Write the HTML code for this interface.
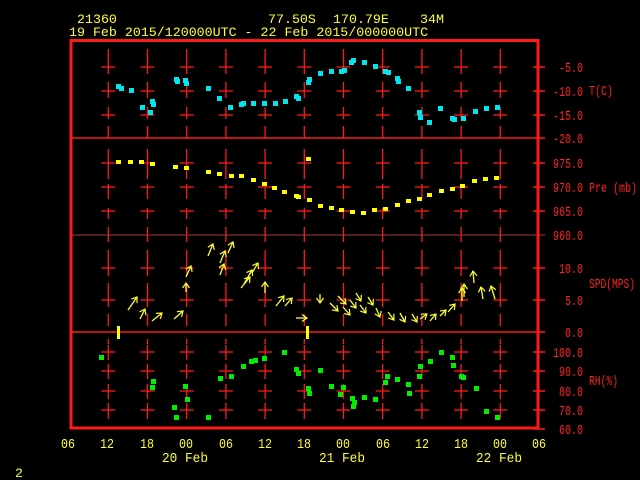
<!DOCTYPE html>
<html><head><meta charset="utf-8"><style>
html,body{margin:0;padding:0;background:#000;width:640px;height:480px;overflow:hidden}
svg{display:block}
text{font-family:"Liberation Mono",monospace;font-size:13.3px}
.y{fill:#ffff33}.r{fill:#ff2020}
.r text{font-size:14px}
.x text{font-size:14px}
</style></head><body>
<svg width="640" height="480" viewBox="0 0 640 480" xmlns="http://www.w3.org/2000/svg">
<defs>
<marker id="ah" markerWidth="8" markerHeight="8" refX="6" refY="4" orient="auto" markerUnits="userSpaceOnUse">
<path d="M1,0.5 L6,4 L1,7.5" fill="none" stroke="#ffff33" stroke-width="1.2"/>
</marker>
<g id="vg" stroke="#ff1a1a" stroke-width="1.3">
<line x1="0" y1="49" x2="0" y2="61"/><line x1="0" y1="60" x2="0" y2="74"/><line x1="-7" y1="67" x2="7" y2="67"/>
<line x1="0" y1="82" x2="0" y2="98"/><line x1="-7" y1="91" x2="7" y2="91"/>
<line x1="0" y1="107" x2="0" y2="119"/><line x1="-7" y1="115" x2="7" y2="115"/>
<line x1="0" y1="126" x2="0" y2="138"/>
<line x1="0" y1="149" x2="0" y2="160"/><line x1="0" y1="160" x2="0" y2="179"/><line x1="-7" y1="163" x2="7" y2="163"/>
<line x1="0" y1="184" x2="0" y2="199"/><line x1="-7" y1="187" x2="7" y2="187"/>
<line x1="0" y1="208" x2="0" y2="219"/><line x1="-7" y1="211" x2="7" y2="211"/>
<line x1="0" y1="227" x2="0" y2="235"/>
<line x1="0" y1="235" x2="0" y2="242"/><line x1="0" y1="250" x2="0" y2="262"/>
<line x1="0" y1="262" x2="0" y2="276"/><line x1="-7" y1="268" x2="7" y2="268"/>
<line x1="0" y1="283" x2="0" y2="293"/><line x1="0" y1="293" x2="0" y2="307"/><line x1="-7" y1="300" x2="7" y2="300"/>
<line x1="0" y1="314" x2="0" y2="326"/>
<line x1="0" y1="339" x2="0" y2="344"/><line x1="0" y1="345" x2="0" y2="360"/><line x1="-7" y1="352" x2="7" y2="352"/>
<line x1="0" y1="364" x2="0" y2="379"/><line x1="-7" y1="371" x2="7" y2="371"/>
<line x1="0" y1="384" x2="0" y2="399"/><line x1="-7" y1="391" x2="7" y2="391"/>
<line x1="0" y1="403" x2="0" y2="419"/><line x1="-7" y1="410" x2="7" y2="410"/>
</g>
</defs>
<text class="y" x="77" y="23">21360</text>
<text class="y" x="268" y="23">77.50S</text>
<text class="y" x="333" y="23">170.79E</text>
<text class="y" x="420" y="23">34M</text>
<text class="y" x="69" y="36">19 Feb 2015/120000UTC - 22 Feb 2015/000000UTC</text>

<use href="#vg" x="108.3"/><use href="#vg" x="147.5"/><use href="#vg" x="186.7"/><use href="#vg" x="225.9"/><use href="#vg" x="265.1"/><use href="#vg" x="304.3"/><use href="#vg" x="343.5"/><use href="#vg" x="382.7"/><use href="#vg" x="421.9"/><use href="#vg" x="461.1"/><use href="#vg" x="500.3"/>

<g stroke="#ff1a1a" stroke-width="1.5">
<line x1="71" y1="138" x2="545" y2="138"/>
<line x1="71" y1="332" x2="545" y2="332"/>
<line x1="533" y1="67" x2="545" y2="67"/><line x1="533" y1="91" x2="545" y2="91"/><line x1="533" y1="115" x2="545" y2="115"/>
<line x1="533" y1="163" x2="545" y2="163"/><line x1="533" y1="187" x2="545" y2="187"/><line x1="533" y1="211" x2="545" y2="211"/>
<line x1="533" y1="268" x2="545" y2="268"/><line x1="533" y1="300" x2="545" y2="300"/>
<line x1="533" y1="352" x2="545" y2="352"/><line x1="533" y1="371" x2="545" y2="371"/><line x1="533" y1="391" x2="545" y2="391"/><line x1="533" y1="410" x2="545" y2="410"/><line x1="533" y1="429" x2="545" y2="429"/>
</g>
<line x1="71" y1="235" x2="545" y2="235" stroke="#a83a3a" stroke-width="1"/>
<rect x="71" y="40.5" width="467" height="387.5" fill="none" stroke="#ff1a1a" stroke-width="3"/>

<g class="r">
<text x="559" y="72" textLength="24" lengthAdjust="spacingAndGlyphs">-5.0</text><text x="553" y="96" textLength="30" lengthAdjust="spacingAndGlyphs">-10.0</text><text x="553" y="120" textLength="30" lengthAdjust="spacingAndGlyphs">-15.0</text><text x="553" y="143" textLength="30" lengthAdjust="spacingAndGlyphs">-20.0</text>
<text x="553" y="168" textLength="30" lengthAdjust="spacingAndGlyphs">975.0</text><text x="553" y="192" textLength="30" lengthAdjust="spacingAndGlyphs">970.0</text><text x="553" y="216" textLength="30" lengthAdjust="spacingAndGlyphs">965.0</text><text x="553" y="240" textLength="30" lengthAdjust="spacingAndGlyphs">960.0</text>
<text x="559" y="273" textLength="24" lengthAdjust="spacingAndGlyphs">10.0</text><text x="565" y="305" textLength="18" lengthAdjust="spacingAndGlyphs">5.0</text><text x="565" y="337" textLength="18" lengthAdjust="spacingAndGlyphs">0.0</text>
<text x="553" y="357" textLength="30" lengthAdjust="spacingAndGlyphs">100.0</text><text x="559" y="376" textLength="24" lengthAdjust="spacingAndGlyphs">90.0</text><text x="559" y="396" textLength="24" lengthAdjust="spacingAndGlyphs">80.0</text><text x="559" y="415" textLength="24" lengthAdjust="spacingAndGlyphs">70.0</text><text x="559" y="434" textLength="24" lengthAdjust="spacingAndGlyphs">60.0</text>
<text x="589" y="95" textLength="24" lengthAdjust="spacingAndGlyphs">T(C)</text><text x="589" y="192" textLength="48" lengthAdjust="spacingAndGlyphs">Pre (mb)</text><text x="589" y="288" textLength="46" lengthAdjust="spacingAndGlyphs">SPD(MPS)</text><text x="589" y="385" textLength="29" lengthAdjust="spacingAndGlyphs">RH(%)</text>
</g>
<g class="y x">
<text x="61" y="448" textLength="14" lengthAdjust="spacingAndGlyphs">06</text><text x="100" y="448" textLength="14" lengthAdjust="spacingAndGlyphs">12</text><text x="140" y="448" textLength="14" lengthAdjust="spacingAndGlyphs">18</text><text x="179" y="448" textLength="14" lengthAdjust="spacingAndGlyphs">00</text><text x="219" y="448" textLength="14" lengthAdjust="spacingAndGlyphs">06</text><text x="258" y="448" textLength="14" lengthAdjust="spacingAndGlyphs">12</text><text x="297" y="448" textLength="14" lengthAdjust="spacingAndGlyphs">18</text><text x="336" y="448" textLength="14" lengthAdjust="spacingAndGlyphs">00</text><text x="376" y="448" textLength="14" lengthAdjust="spacingAndGlyphs">06</text><text x="415" y="448" textLength="14" lengthAdjust="spacingAndGlyphs">12</text><text x="454" y="448" textLength="14" lengthAdjust="spacingAndGlyphs">18</text><text x="493" y="448" textLength="14" lengthAdjust="spacingAndGlyphs">00</text><text x="532" y="448" textLength="14" lengthAdjust="spacingAndGlyphs">06</text>
<text x="162" y="462" textLength="46" lengthAdjust="spacingAndGlyphs">20 Feb</text><text x="319" y="462" textLength="46" lengthAdjust="spacingAndGlyphs">21 Feb</text><text x="476" y="462" textLength="46" lengthAdjust="spacingAndGlyphs">22 Feb</text>
</g>
<text class="y" x="15" y="477">2</text>

<g fill="#00e5ee">
<rect x="116" y="84" width="5" height="5"/><rect x="119" y="86" width="5" height="5"/><rect x="129" y="88" width="5" height="5"/><rect x="140" y="105" width="5" height="5"/><rect x="148" y="110" width="5" height="5"/><rect x="150" y="99" width="5" height="5"/><rect x="151" y="102" width="5" height="5"/><rect x="174" y="77" width="5" height="5"/><rect x="175" y="79" width="5" height="5"/><rect x="183" y="78" width="5" height="5"/><rect x="184" y="81" width="5" height="5"/><rect x="206" y="86" width="5" height="5"/><rect x="217" y="96" width="5" height="5"/><rect x="228" y="105" width="5" height="5"/><rect x="239" y="102" width="5" height="5"/><rect x="241" y="101" width="5" height="5"/><rect x="251" y="101" width="5" height="5"/><rect x="262" y="101" width="5" height="5"/><rect x="273" y="101" width="5" height="5"/><rect x="283" y="99" width="5" height="5"/><rect x="294" y="94" width="5" height="5"/><rect x="296" y="96" width="5" height="5"/><rect x="306" y="80" width="5" height="5"/><rect x="307" y="77" width="5" height="5"/><rect x="318" y="71" width="5" height="5"/><rect x="329" y="69" width="5" height="5"/><rect x="339" y="69" width="5" height="5"/><rect x="342" y="68" width="5" height="5"/><rect x="349" y="60" width="5" height="5"/><rect x="351" y="58" width="5" height="5"/><rect x="362" y="60" width="5" height="5"/><rect x="373" y="64" width="5" height="5"/><rect x="383" y="69" width="5" height="5"/><rect x="386" y="70" width="5" height="5"/><rect x="395" y="76" width="5" height="5"/><rect x="396" y="79" width="5" height="5"/><rect x="406" y="86" width="5" height="5"/><rect x="417" y="110" width="5" height="5"/><rect x="418" y="115" width="5" height="5"/><rect x="427" y="120" width="5" height="5"/><rect x="438" y="106" width="5" height="5"/><rect x="450" y="116" width="5" height="5"/><rect x="452" y="117" width="5" height="5"/><rect x="461" y="116" width="5" height="5"/><rect x="473" y="109" width="5" height="5"/><rect x="484" y="106" width="5" height="5"/><rect x="495" y="105" width="5" height="5"/>
</g>
<g fill="#ffff00">
<rect x="116" y="160" width="5" height="4"/><rect x="128" y="160" width="5" height="4"/><rect x="139" y="160" width="5" height="4"/><rect x="150" y="162" width="5" height="4"/><rect x="173" y="165" width="5" height="4"/><rect x="184" y="166" width="5" height="4"/><rect x="206" y="170" width="5" height="4"/><rect x="217" y="172" width="5" height="4"/><rect x="229" y="174" width="5" height="4"/><rect x="239" y="174" width="5" height="4"/><rect x="251" y="178" width="5" height="4"/><rect x="262" y="182" width="5" height="4"/><rect x="272" y="186" width="5" height="4"/><rect x="282" y="190" width="5" height="4"/><rect x="294" y="194" width="5" height="4"/><rect x="296" y="195" width="5" height="4"/><rect x="306" y="157" width="5" height="4"/><rect x="307" y="198" width="5" height="4"/><rect x="318" y="204" width="5" height="4"/><rect x="329" y="206" width="5" height="4"/><rect x="339" y="208" width="5" height="4"/><rect x="350" y="210" width="5" height="4"/><rect x="361" y="211" width="5" height="4"/><rect x="372" y="208" width="5" height="4"/><rect x="383" y="207" width="5" height="4"/><rect x="395" y="203" width="5" height="4"/><rect x="406" y="199" width="5" height="4"/><rect x="417" y="197" width="5" height="4"/><rect x="427" y="193" width="5" height="4"/><rect x="439" y="189" width="5" height="4"/><rect x="450" y="187" width="5" height="4"/><rect x="460" y="184" width="5" height="4"/><rect x="472" y="179" width="5" height="4"/><rect x="483" y="177" width="5" height="4"/><rect x="494" y="176" width="5" height="4"/>
</g>
<g fill="#00ee00">
<rect x="99" y="355" width="5" height="5"/><rect x="151" y="379" width="5" height="5"/><rect x="150" y="385" width="5" height="5"/><rect x="172" y="405" width="5" height="5"/><rect x="174" y="415" width="5" height="5"/><rect x="183" y="384" width="5" height="5"/><rect x="185" y="397" width="5" height="5"/><rect x="206" y="415" width="5" height="5"/><rect x="218" y="376" width="5" height="5"/><rect x="229" y="374" width="5" height="5"/><rect x="241" y="364" width="5" height="5"/><rect x="249" y="359" width="5" height="5"/><rect x="253" y="358" width="5" height="5"/><rect x="262" y="356" width="5" height="5"/><rect x="282" y="350" width="5" height="5"/><rect x="294" y="367" width="5" height="5"/><rect x="296" y="371" width="5" height="5"/><rect x="306" y="386" width="5" height="5"/><rect x="307" y="391" width="5" height="5"/><rect x="318" y="368" width="5" height="5"/><rect x="329" y="384" width="5" height="5"/><rect x="341" y="385" width="5" height="5"/><rect x="338" y="392" width="5" height="5"/><rect x="350" y="396" width="5" height="5"/><rect x="351" y="404" width="5" height="5"/><rect x="352" y="400" width="5" height="5"/><rect x="362" y="395" width="5" height="5"/><rect x="373" y="397" width="5" height="5"/><rect x="383" y="380" width="5" height="5"/><rect x="385" y="374" width="5" height="5"/><rect x="395" y="377" width="5" height="5"/><rect x="406" y="382" width="5" height="5"/><rect x="407" y="391" width="5" height="5"/><rect x="417" y="374" width="5" height="5"/><rect x="418" y="364" width="5" height="5"/><rect x="428" y="359" width="5" height="5"/><rect x="439" y="350" width="5" height="5"/><rect x="450" y="355" width="5" height="5"/><rect x="451" y="363" width="5" height="5"/><rect x="459" y="374" width="5" height="5"/><rect x="461" y="375" width="5" height="5"/><rect x="474" y="386" width="5" height="5"/><rect x="484" y="409" width="5" height="5"/><rect x="495" y="415" width="5" height="5"/>
</g>
<g stroke="#ffff33" stroke-width="1.3" marker-end="url(#ah)">
<line x1="128" y1="310" x2="137" y2="297"/><line x1="140" y1="319" x2="145" y2="309"/><line x1="152" y1="321" x2="162" y2="313"/><line x1="174" y1="319" x2="183" y2="311"/>
<line x1="186" y1="292" x2="186" y2="283"/><line x1="186" y1="277" x2="191" y2="266"/><line x1="208" y1="256" x2="213" y2="244"/><line x1="220" y1="263" x2="225" y2="251"/><line x1="228" y1="253" x2="233" y2="242"/><line x1="220" y1="275" x2="224" y2="264"/>
<line x1="241" y1="288" x2="250" y2="277"/><line x1="244" y1="284" x2="252" y2="270"/><line x1="252" y1="273" x2="258" y2="263"/><line x1="265" y1="293" x2="265" y2="282"/><line x1="276" y1="306" x2="284" y2="296"/><line x1="285" y1="306" x2="292" y2="298"/>
<line x1="296" y1="318" x2="307" y2="318"/><line x1="320" y1="294" x2="320" y2="303"/><line x1="330" y1="303" x2="338" y2="311"/><line x1="338" y1="296" x2="346" y2="304"/><line x1="343" y1="307" x2="350" y2="315"/><line x1="350" y1="300" x2="356" y2="308"/><line x1="356" y1="293" x2="361" y2="301"/><line x1="360" y1="305" x2="366" y2="313"/><line x1="368" y1="297" x2="373" y2="305"/>
<line x1="376" y1="308" x2="380" y2="317"/><line x1="388" y1="312" x2="394" y2="320"/><line x1="400" y1="313" x2="405" y2="322"/><line x1="412" y1="314" x2="417" y2="322"/><line x1="420" y1="319" x2="427" y2="314"/><line x1="430" y1="321" x2="436" y2="314"/><line x1="440" y1="316" x2="446" y2="310"/><line x1="448" y1="312" x2="455" y2="304"/>
<line x1="462" y1="301" x2="462" y2="288"/><line x1="464" y1="297" x2="464" y2="284"/><line x1="474" y1="283" x2="473" y2="271"/><line x1="483" y1="299" x2="481" y2="287"/><line x1="495" y1="299" x2="491" y2="286"/>
</g>
<g fill="#ffff00"><rect x="117" y="326" width="3" height="13"/><rect x="306" y="326" width="3" height="13"/></g>
</svg>
</body></html>
